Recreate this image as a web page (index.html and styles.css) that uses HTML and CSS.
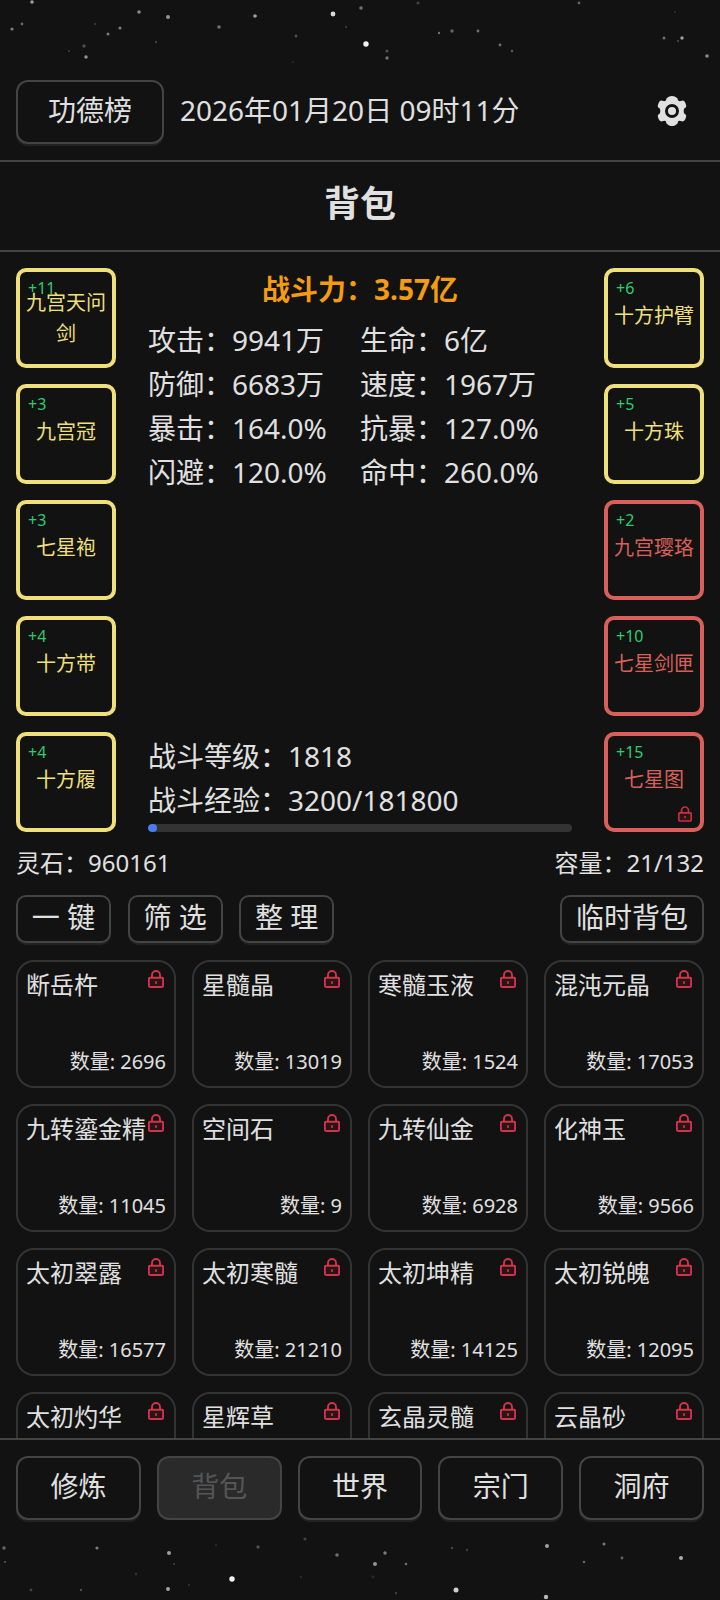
FILE: index.html
```html
<!DOCTYPE html>
<html lang="zh-CN">
<head>
<meta charset="utf-8">
<title>背包</title>
<link rel="stylesheet" href="styles.css">
</head>
<body>
<svg class="defs" width="0" height="0" aria-hidden="true">
  <symbol id="lock" viewBox="0 0 18 20">
    <path d="M4.5 9V5.5a4.5 4.5 0 0 1 9 0V9" fill="none" stroke="currentColor" stroke-width="2.2"/>
    <rect x="1" y="8.5" width="16" height="10.5" rx="1.5" fill="currentColor" fill-opacity=".12" stroke="currentColor" stroke-width="2.2"/>
    <rect x="8" y="12.5" width="2" height="3" fill="currentColor"/>
  </symbol>
</svg>
<div class="page">
  <svg class="stars stars-top" viewBox="0 0 720 80" width="720" height="80" aria-hidden="true">
    <g fill="#fff">
      <circle cx="32" cy="2" r="1.8" opacity=".6"/><circle cx="139" cy="12" r="1.8" opacity=".5"/><circle cx="168" cy="17" r="2" opacity=".55"/><circle cx="255" cy="16" r="1.8" opacity=".6"/><circle cx="333" cy="14" r="2.4" opacity=".85"/><circle cx="361" cy="8" r="1.8" opacity=".4"/><circle cx="418" cy="3" r="1.6" opacity=".2"/><circle cx="579" cy="3" r="1.4" opacity=".35"/><circle cx="22" cy="24" r="1.4" opacity=".35"/><circle cx="12" cy="29" r="1.6" opacity=".45"/><circle cx="120" cy="28" r="1.6" opacity=".45"/><circle cx="108" cy="34" r="1.5" opacity=".45"/><circle cx="219" cy="27" r="1.8" opacity=".4"/><circle cx="296" cy="36" r="1.5" opacity=".25"/><circle cx="439" cy="33" r="1.2" opacity=".4"/><circle cx="452" cy="31" r="1.7" opacity=".35"/><circle cx="478" cy="31" r="1.4" opacity=".4"/><circle cx="664" cy="38" r="1.5" opacity=".4"/><circle cx="682" cy="38" r="1.7" opacity=".6"/><circle cx="678" cy="41" r="1.2" opacity=".2"/><circle cx="84" cy="46" r="1.7" opacity=".25"/><circle cx="86" cy="57" r="1.7" opacity=".55"/><circle cx="156" cy="42" r="1.2" opacity=".2"/><circle cx="366" cy="44" r="2.7" opacity=".95"/><circle cx="387" cy="51" r="1.6" opacity=".25"/><circle cx="387" cy="58" r="1.7" opacity=".4"/><circle cx="500" cy="45" r="1.4" opacity=".4"/><circle cx="512" cy="51" r="1.3" opacity=".3"/><circle cx="707" cy="56" r="1.8" opacity=".5"/><circle cx="95" cy="24" r="1" opacity=".2"/><circle cx="346" cy="27" r="1.1" opacity=".2"/><circle cx="69" cy="51" r="1" opacity=".2"/><circle cx="675" cy="12" r="1" opacity=".12"/><circle cx="293" cy="62" r="1" opacity=".1"/>
    </g>
  </svg>

  <header class="topbar">
    <button class="btn btn-rank">功德榜</button>
    <span class="clock">2026年01月20日 09时11分</span>
    <svg class="gear" viewBox="0 0 32 32" width="32" height="32" aria-hidden="true">
      <path fill="#e0e0e0" fill-rule="evenodd" d="M13.2 1.6 Q16 .2 18.8 1.6 L21 3 Q22 3.6 21.8 5 Q22.6 6.6 24.6 6 L26.6 5.6 Q28.4 5.6 29.4 8 L30.2 10.4 Q30.6 12 29 13 L28 13.8 Q27.4 16 28 18.2 L29 19 Q30.6 20 30.2 21.6 L29.4 24 Q28.4 26.4 26.6 26.4 L24.6 26 Q22.6 25.4 21.8 27 Q22 28.4 21 29 L18.8 30.4 Q16 31.8 13.2 30.4 L11 29 Q10 28.4 10.2 27 Q9.4 25.4 7.4 26 L5.4 26.4 Q3.6 26.4 2.6 24 L1.8 21.6 Q1.4 20 3 19 L4 18.2 Q4.6 16 4 13.8 L3 13 Q1.4 12 1.8 10.4 L2.6 8 Q3.6 5.6 5.4 5.6 L7.4 6 Q9.4 6.6 10.2 5 Q10 3.6 11 3 Z"/>
      <circle cx="16" cy="16" r="5.5" fill="none" stroke="#121212" stroke-width="3"/>
    </svg>
  </header>

  <h1 class="title">背包</h1>

  <main class="main">
    <section class="equip">
      <div class="slots">
        <div class="slot slot-long"><span class="plus">+11</span>九宫天问剑</div>
        <div class="slot"><span class="plus">+3</span>九宫冠</div>
        <div class="slot"><span class="plus">+3</span>七星袍</div>
        <div class="slot"><span class="plus">+4</span>十方带</div>
        <div class="slot"><span class="plus">+4</span>十方履</div>
      </div>
      <div class="center">
        <div class="power">战斗力：3.57亿</div>
        <div class="stats">
          <div class="stat">攻击：9941万</div>
          <div class="stat">生命：6亿</div>
          <div class="stat">防御：6683万</div>
          <div class="stat">速度：1967万</div>
          <div class="stat">暴击：164.0%</div>
          <div class="stat">抗暴：127.0%</div>
          <div class="stat">闪避：120.0%</div>
          <div class="stat">命中：260.0%</div>
        </div>
        <div class="level">
          <div class="stat">战斗等级：1818</div>
          <div class="stat">战斗经验：3200/181800</div>
          <div class="bar"><div class="bar-fill"></div></div>
        </div>
      </div>
      <div class="slots">
        <div class="slot"><span class="plus">+6</span>十方护臂</div>
        <div class="slot"><span class="plus">+5</span>十方珠</div>
        <div class="slot red"><span class="plus">+2</span>九宫璎珞</div>
        <div class="slot red"><span class="plus">+10</span>七星剑匣</div>
        <div class="slot red"><span class="plus">+15</span>七星图<svg class="slot-lock"><use href="#lock"/></svg></div>
      </div>
    </section>

    <div class="info"><span>灵石：960161</span><span>容量：21/132</span></div>

    <div class="tools">
      <button class="btn tool">一 键</button>
      <button class="btn tool">筛 选</button>
      <button class="btn tool">整 理</button>
      <button class="btn tool tool-temp">临时背包</button>
    </div>

    <div class="grid">
      <div class="card"><div class="name">断岳杵</div><svg class="lock"><use href="#lock"/></svg><div class="count">数量: 2696</div></div>
      <div class="card"><div class="name">星髓晶</div><svg class="lock"><use href="#lock"/></svg><div class="count">数量: 13019</div></div>
      <div class="card"><div class="name">寒髓玉液</div><svg class="lock"><use href="#lock"/></svg><div class="count">数量: 1524</div></div>
      <div class="card"><div class="name">混沌元晶</div><svg class="lock"><use href="#lock"/></svg><div class="count">数量: 17053</div></div>
      <div class="card"><div class="name">九转鎏金精</div><svg class="lock"><use href="#lock"/></svg><div class="count">数量: 11045</div></div>
      <div class="card"><div class="name">空间石</div><svg class="lock"><use href="#lock"/></svg><div class="count">数量: 9</div></div>
      <div class="card"><div class="name">九转仙金</div><svg class="lock"><use href="#lock"/></svg><div class="count">数量: 6928</div></div>
      <div class="card"><div class="name">化神玉</div><svg class="lock"><use href="#lock"/></svg><div class="count">数量: 9566</div></div>
      <div class="card"><div class="name">太初翠露</div><svg class="lock"><use href="#lock"/></svg><div class="count">数量: 16577</div></div>
      <div class="card"><div class="name">太初寒髓</div><svg class="lock"><use href="#lock"/></svg><div class="count">数量: 21210</div></div>
      <div class="card"><div class="name">太初坤精</div><svg class="lock"><use href="#lock"/></svg><div class="count">数量: 14125</div></div>
      <div class="card"><div class="name">太初锐魄</div><svg class="lock"><use href="#lock"/></svg><div class="count">数量: 12095</div></div>
      <div class="card"><div class="name">太初灼华</div><svg class="lock"><use href="#lock"/></svg></div>
      <div class="card"><div class="name">星辉草</div><svg class="lock"><use href="#lock"/></svg></div>
      <div class="card"><div class="name">玄晶灵髓</div><svg class="lock"><use href="#lock"/></svg></div>
      <div class="card"><div class="name">云晶砂</div><svg class="lock"><use href="#lock"/></svg></div>
    </div>
  </main>

  <nav class="nav">
    <button class="btn nav-btn">修炼</button>
    <button class="btn nav-btn active">背包</button>
    <button class="btn nav-btn">世界</button>
    <button class="btn nav-btn">宗门</button>
    <button class="btn nav-btn">洞府</button>
  </nav>

  <svg class="stars stars-bottom" viewBox="0 1520 720 80" width="720" height="80" aria-hidden="true">
    <g fill="#fff">
      <circle cx="4" cy="1548" r="1.8" opacity=".35"/><circle cx="97" cy="1548" r="1.6" opacity=".45"/><circle cx="169" cy="1553" r="2" opacity=".6"/><circle cx="258" cy="1547" r="1.7" opacity=".25"/><circle cx="305" cy="1539" r="1.6" opacity=".2"/><circle cx="337" cy="1555" r="1.7" opacity=".4"/><circle cx="385" cy="1553" r="1.7" opacity=".45"/><circle cx="375" cy="1564" r="2" opacity=".55"/><circle cx="406" cy="1564" r="1.3" opacity=".4"/><circle cx="547" cy="1546" r="2" opacity=".6"/><circle cx="604" cy="1544" r="1.5" opacity=".45"/><circle cx="584" cy="1562" r="1.3" opacity=".35"/><circle cx="622" cy="1558" r="1.4" opacity=".35"/><circle cx="681" cy="1558" r="2" opacity=".65"/><circle cx="452" cy="1548" r="1.3" opacity=".2"/><circle cx="467" cy="1550" r="1.2" opacity=".2"/><circle cx="5" cy="1562" r="1" opacity=".3"/><circle cx="174" cy="1564" r="1" opacity=".2"/><circle cx="232" cy="1579" r="2.7" opacity=".95"/><circle cx="168" cy="1589" r="2" opacity=".6"/><circle cx="456" cy="1590" r="2.5" opacity=".8"/><circle cx="546" cy="1597" r="2.2" opacity=".7"/><circle cx="31" cy="1590" r="1.4" opacity=".2"/><circle cx="81" cy="1590" r="1.2" opacity=".25"/><circle cx="136" cy="1574" r="1.2" opacity=".15"/><circle cx="189" cy="1585" r="1" opacity=".15"/><circle cx="301" cy="1577" r="1.2" opacity=".1"/><circle cx="373" cy="1577" r="1.4" opacity=".1"/><circle cx="396" cy="1593" r="1.2" opacity=".2"/><circle cx="216" cy="1545" r="1" opacity=".12"/>
    </g>
  </svg>
</div>
</body>
</html>
```

FILE: styles.css
```css
* { box-sizing: border-box; }
html, body { margin: 0; padding: 0; background: #121212; }
body { font-family: "Noto Sans", "Noto Sans CJK SC", sans-serif; color: #e0e0e0; }
.defs { display: block; height: 0; }
.page { width: 720px; height: 1600px; display: flex; flex-direction: column; overflow: hidden; background: #121212; }
.stars { display: block; flex: none; }

.btn {
  font-family: inherit; color: #e0e0e0; background: #121212;
  border: 2px solid #444; border-radius: 12px;
  box-shadow: 0 2px 0 #222; padding: 0 0 4px; line-height: 1;
}

.topbar { height: 82px; flex: none; display: flex; align-items: flex-start; padding: 0 17px 0 16px; border-bottom: 2px solid #444; }
.btn-rank { width: 148px; height: 64px; font-size: 28px; flex: none; }
.clock { margin-left: 16px; font-size: 28px; line-height: 60px; white-space: nowrap; flex: 1; }
.gear { margin-top: 15px; margin-right: 15px; flex: none; }

.title { margin: 0; height: 90px; flex: none; font-size: 36px; font-weight: 700; line-height: 84px; text-align: center; border-bottom: 2px solid #444; color: #e0e0e0; }

.main { flex: 1; min-height: 0; overflow: hidden; padding: 16px 16px 0; }

.equip { display: flex; justify-content: space-between; height: 564px; }
.slots { width: 100px; display: flex; flex-direction: column; gap: 16px; flex: none; }
.slot {
  position: relative; width: 100px; height: 100px;
  display: flex; align-items: center; justify-content: center; text-align: center;
  border: 4px solid #f0e07c; border-radius: 10px;
  color: #f0e07c; font-size: 20px; line-height: 31px; padding: 0 4px 6px;
}
.slot-long { padding-bottom: 1px; }
.slot.red { border-color: #d9605a; color: #d9605a; }
.plus { position: absolute; left: 8px; top: 6px; font-size: 16px; line-height: 20px; color: #2ecc71; }
.slot-lock { position: absolute; right: 8px; bottom: 6px; width: 14px; height: 16px; color: #c92f40; }

.center { width: 424px; display: flex; flex-direction: column; align-items: stretch; }
.power { font-size: 28px; font-weight: 700; color: #f39c12; line-height: 42px; text-align: center; }
.stats { display: grid; grid-template-columns: 212px 212px; grid-auto-rows: 44px; margin-top: 8px; }
.stat { white-space: nowrap; font-size: 28px; line-height: 44px; }
.level { margin-top: auto; }
.bar { height: 8px; margin-top: 2px; background: #333; border-radius: 4px; overflow: hidden; }
.bar-fill { width: 9px; height: 100%; background: #4a7cf0; border-radius: 4px; }

.info { display: flex; justify-content: space-between; font-size: 24px; line-height: 34px; margin-top: 14px; }

.tools { display: flex; gap: 16.6px; margin-top: 15px; }
.tool { width: 95px; height: 48px; font-size: 28px; border-radius: 10px; }
.tool-temp { width: 144px; margin-left: auto; }

.grid { display: grid; grid-template-columns: repeat(4, 160px); grid-auto-rows: 128px; gap: 16px; margin-top: 17px; }
.card { position: relative; border: 2px solid #333; border-radius: 18px; padding: 5px 8px 9px; display: flex; flex-direction: column; justify-content: space-between; }
.name { font-size: 24px; line-height: 36px; white-space: nowrap; }
.count { font-size: 20px; line-height: 30px; text-align: right; white-space: nowrap; }
.lock { position: absolute; right: 10px; top: 8px; width: 16px; height: 18px; color: #d0324a; }

.nav { flex: none; height: 82px; display: flex; gap: 16px; padding: 16px 16px 0; border-top: 2px solid #444; }
.nav-btn { flex: 1; height: 64px; font-size: 28px; }
.nav-btn.active { background: #2a2a2a; color: #555; box-shadow: none; }
```
